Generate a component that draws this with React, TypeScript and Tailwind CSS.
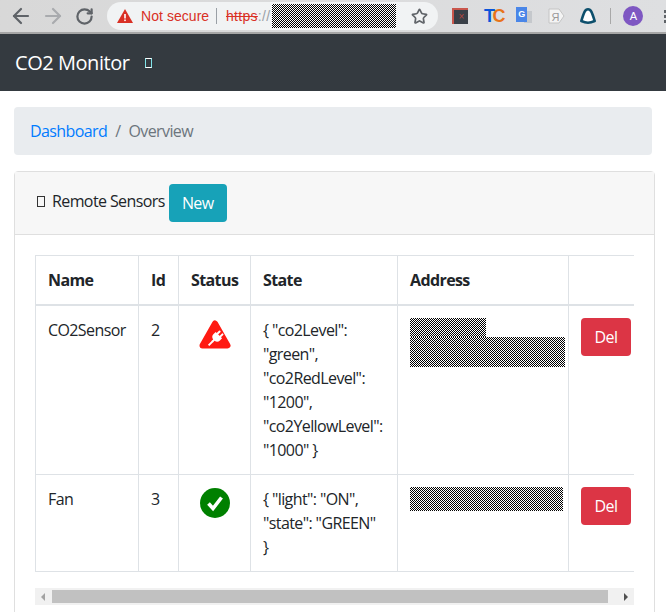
import React from 'react';
import { ArrowLeft, ArrowRight, RotateCw, Star } from 'lucide-react';

const font = "font-['Open_Sans','Noto_Sans',sans-serif]";

const Redacted: React.FC<{ className: string }> = ({ className }) => (
  <div className={`bg-[repeating-conic-gradient(#000_0_25%,#fff_0_50%)] bg-[length:2px_2px] ${className}`}></div>
);

const MissingGlyph: React.FC<{ className: string }> = ({ className }) => (
  <span className={`inline-block border ${className}`}></span>
);

const PlugWarning = () => (
  <svg width="32" height="32" viewBox="0 0 32 32" className="block mx-auto">
    <path d="M16 5.5 L28.5 27.5 H3.5 Z" fill="#ff1a12" stroke="#ff1a12" strokeWidth="6" strokeLinejoin="round" />
    <g transform="rotate(45 16 21)" fill="#fff">
      <rect x="13" y="11.5" width="2" height="5" rx="0.9" />
      <rect x="17" y="11.5" width="2" height="5" rx="0.9" />
      <path d="M11.5 15.5 H20.5 V18.5 Q20.5 22 17 22.6 V25 H15 V22.6 Q11.5 22 11.5 18.5 Z" />
      <path d="M15 24 H17 V30 H15 Z" />
    </g>
  </svg>
);

const CheckOk = () => (
  <svg width="32" height="32" viewBox="0 0 32 32" className="block mx-auto">
    <circle cx="16" cy="16" r="15" fill="#008000" />
    <path d="M9.5 16.5 L14 21.5 L22.5 10.5" fill="none" stroke="#fff" strokeWidth="3.6" />
  </svg>
);

const BrowserBar = () => (
  <div className="h-[34px] shrink-0 flex items-center bg-gradient-to-r from-[#d8d8d8] to-[#dedfe1] border-b-2 border-[#a6a6a6] overflow-hidden font-['Liberation_Sans',sans-serif]">
    <ArrowLeft className="ml-[9px] w-6 h-6 shrink-0 text-[#5f6368]" strokeWidth={2.2} />
    <ArrowRight className="ml-[8px] w-6 h-6 shrink-0 text-[#a9abae]" strokeWidth={2.2} />
    <RotateCw className="ml-[10px] w-[19px] h-[19px] shrink-0 text-[#5f6368]" strokeWidth={2.8} />
    <div className="ml-[13px] w-[331px] h-[28px] shrink-0 rounded-full bg-[#f1f3f4] flex items-center">
      <svg width="16" height="14" viewBox="0 0 16 14" className="ml-[10px] shrink-0">
        <path d="M8 0 L16 14 H0 Z" fill="#d93025" />
        <rect x="7.2" y="5" width="1.6" height="4.5" fill="#fff" />
        <rect x="7.2" y="10.5" width="1.6" height="1.6" fill="#fff" />
      </svg>
      <span className="ml-[8px] w-[67px] text-[14px] tracking-[0.05px] text-[#d93025] whitespace-nowrap">Not secure</span>
      <span className="ml-[8px] w-px h-[16px] bg-[#9aa0a6]"></span>
      <span className="ml-[9px] w-[46px] text-[14px] tracking-[0.3px] whitespace-nowrap">
        <span className="text-[#d93025] line-through">https</span>
        <span className="text-[#9aa0a6]">://</span>
      </span>
      <Redacted className="w-[124px] h-[24px] shrink-0" />
      <Star className="ml-[15px] w-[17px] h-[17px] shrink-0 text-[#5f6368]" strokeWidth={2.4} />
    </div>
    {/* extensions */}
    <div className="ml-[14px] relative w-[16px] h-[16px] shrink-0 bg-[#c9564c]">
      <div className="absolute left-[2px] top-[2px] w-[14px] h-[14px] bg-[#3a4048] text-[#b5473f] text-[10px] leading-[14px] text-center">×</div>
    </div>
    <div className="ml-[16px] w-[16px] shrink-0 text-[18px] leading-[18px] font-bold tracking-[-2.5px] text-[#0b55d9] whitespace-nowrap">
      T<span className="text-[#e8731a]">C</span>
    </div>
    <div className="ml-[16px] relative w-[16px] h-[18px] shrink-0">
      <span className="absolute left-[8px] top-[4px] w-[8px] h-[12px] bg-[#c5c8cc]"></span>
      <span className="absolute left-0 top-0 w-[11px] h-[15px] bg-[#4a86e8] text-white text-[9px] leading-[14px] font-bold text-center">G</span>
    </div>
    <svg width="17" height="16" viewBox="0 0 17 16" className="ml-[16px] shrink-0">
      <path d="M1 1 H11 L16 8 L11 15 H1 Z" fill="#f4f4f4" stroke="#c4c4c4" />
      <text x="3.5" y="12.5" fontSize="11" fill="#999">Я</text>
    </svg>
    <svg width="16" height="16" viewBox="0 0 16 16" className="ml-[15px] shrink-0">
      <path d="M8 1.3 C11 1.3 12 4 14.7 13 Q11 14.7 8 14.7 Q5 14.7 1.3 13 C4 4 5 1.3 8 1.3 Z" fill="#fff" stroke="#0d4f6c" strokeWidth="2.6" strokeLinejoin="round" />
    </svg>
    <span className="ml-[14px] w-px h-[16px] shrink-0 bg-[#a8a8a8]"></span>
    <div className="ml-[12px] w-[20px] h-[20px] shrink-0 rounded-full bg-[#7e57c2] text-white text-[11px] leading-[20px] text-center">A</div>
    <div className="ml-[21px] shrink-0 flex flex-col gap-[2px]">
      <span className="w-[2px] h-[3px] bg-[#5f6368]"></span>
      <span className="w-[2px] h-[3px] bg-[#5f6368]"></span>
      <span className="w-[2px] h-[3px] bg-[#5f6368]"></span>
    </div>
  </div>
);

const th = 'border border-[#dee2e6] border-b-2 p-3 text-left font-bold text-[#212529]';
const td = 'border border-[#dee2e6] p-3 align-top text-[#212529] font-normal';

const DelButton = () => (
  <button className="w-[50px] h-[38px] rounded bg-[#dc3545] text-white">Del</button>
);

const App = () => {
  return (
    <div className={`w-[666px] h-[612px] overflow-hidden flex flex-col bg-white text-[16px] leading-6 tracking-[-0.6px] ${font}`}>
      <BrowserBar />
      <nav className="h-[57px] shrink-0 bg-[#343a40] flex items-center px-[15px]">
        <span className="text-[20px] text-white leading-[30px] tracking-[-0.45px]">CO2 Monitor</span>
        <MissingGlyph className="ml-[15px] w-[7px] h-[10px] border-y-white border-x-[#7fe3e8]" />
      </nav>
      <main className="px-[14px] pt-4">
        <div className="h-12 rounded bg-[#e9ecef] px-4 flex items-center">
          <span className="text-[#007bff]">Dashboard</span>
          <span className="text-[#6c757d] px-2">/</span>
          <span className="text-[#6c757d]">Overview</span>
        </div>
        <div className="mt-4 w-[641px] border border-[#dfdfdf] rounded-t h-[500px]">
          <div className="h-[63px] bg-[#f7f7f7] border-b border-[#dfdfdf] px-[22px] pt-3 flex items-start">
            <div className="h-[38px] pb-1 flex items-center text-[#212529]">
              <MissingGlyph className="w-[8px] h-[11px] border-[#333] mr-[7px]" />
              Remote Sensors
            </div>
            <button className="ml-[4px] w-[58px] h-[38px] rounded bg-[#17a2b8] text-white">New</button>
          </div>
          <div className="p-5 pr-0">
            <div className="w-[599px] overflow-hidden">
              <table className="table-fixed border-collapse w-[608px]">
                <colgroup>
                  <col className="w-[103px]" />
                  <col className="w-[40px]" />
                  <col className="w-[72px]" />
                  <col className="w-[147px]" />
                  <col className="w-[171px]" />
                  <col className="w-[75px]" />
                </colgroup>
                <thead>
                  <tr>
                    <th className={th}>Name</th>
                    <th className={th}>Id</th>
                    <th className={th}>Status</th>
                    <th className={th}>State</th>
                    <th className={th}>Address</th>
                    <th className={th}></th>
                  </tr>
                </thead>
                <tbody>
                  <tr>
                    <td className={td}>CO2Sensor</td>
                    <td className={td}>2</td>
                    <td className={td}><PlugWarning /></td>
                    <td className={td}>
                      {'{ "co2Level":'}<br />
                      {'"green",'}<br />
                      {'"co2RedLevel":'}<br />
                      {'"1200",'}<br />
                      {'"co2YellowLevel":'}<br />
                      {'"1000" }'}
                    </td>
                    <td className={td}>
                      <Redacted className="w-[76px] h-[19px]" />
                      <Redacted className="w-[155px] h-[30px]" />
                    </td>
                    <td className={td}><DelButton /></td>
                  </tr>
                  <tr>
                    <td className={td}>Fan</td>
                    <td className={td}>3</td>
                    <td className={td}><CheckOk /></td>
                    <td className={td}>
                      {'{ "light": "ON",'}<br />
                      {'"state": "GREEN"'}<br />
                      {'}'}
                    </td>
                    <td className={td}>
                      <Redacted className="w-[153px] h-[24px]" />
                    </td>
                    <td className={td}><DelButton /></td>
                  </tr>
                </tbody>
              </table>
            </div>
            <div className="mt-4 w-[599px] h-[17px] bg-[#f1f1f1] flex items-center">
              <span className="ml-[6px] w-0 h-0 border-y-[4px] border-y-transparent border-r-[4px] border-r-[#a3a3a3]"></span>
              <div className="ml-[7px] w-[556px] h-[13px] bg-[#c1c1c1]"></div>
              <span className="ml-[16px] w-0 h-0 border-y-[4px] border-y-transparent border-l-[4px] border-l-[#505050]"></span>
            </div>
          </div>
        </div>
      </main>
    </div>
  );
};

export default App;
